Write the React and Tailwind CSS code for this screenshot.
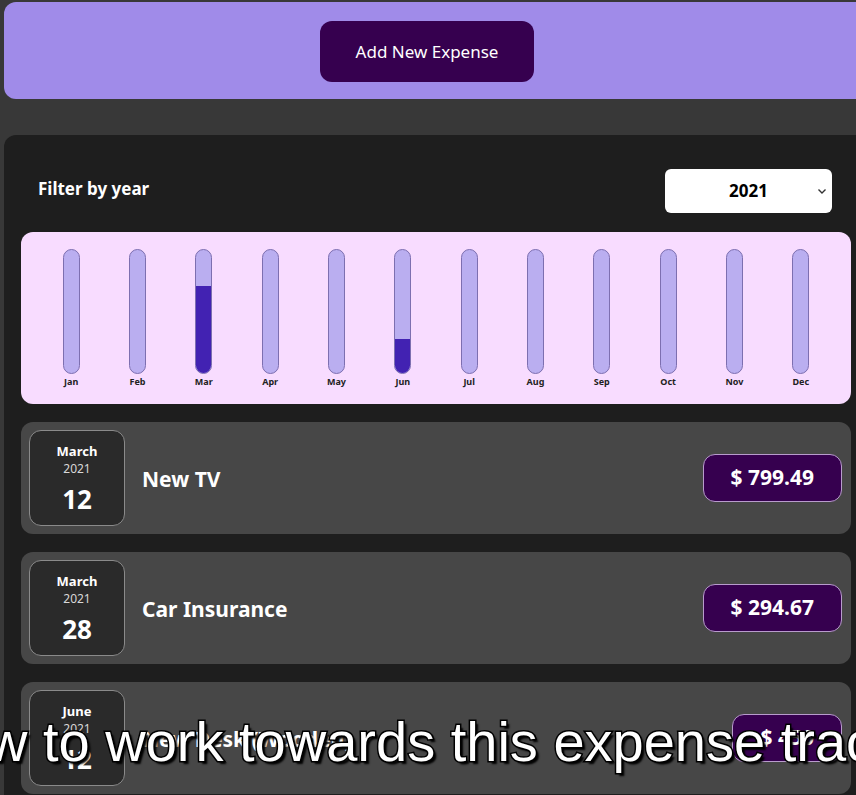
import React from 'react';

const months = [
    { label: 'Jan', fill: 0 },
    { label: 'Feb', fill: 0 },
    { label: 'Mar', fill: 71 },
    { label: 'Apr', fill: 0 },
    { label: 'May', fill: 0 },
    { label: 'Jun', fill: 28 },
    { label: 'Jul', fill: 0 },
    { label: 'Aug', fill: 0 },
    { label: 'Sep', fill: 0 },
    { label: 'Oct', fill: 0 },
    { label: 'Nov', fill: 0 },
    { label: 'Dec', fill: 0 },
];

const expenses = [
    { id: 'e1', month: 'March', year: '2021', day: '12', title: 'New TV', amount: '$ 799.49' },
    { id: 'e2', month: 'March', year: '2021', day: '28', title: 'Car Insurance', amount: '$ 294.67' },
    { id: 'e3', month: 'June', year: '2021', day: '12', title: 'New Desk (Wooden)', amount: '$ 450' },
];

function ExpenseDate({ month, year, day }) {
    return (
        <div className="w-[96px] h-[96px] shrink-0 flex flex-col items-center pt-[11px] rounded-xl border border-[#8a8a8a] bg-[#2a2a2a] text-white">
            <div className="text-[13px] font-bold leading-[18px]">{month}</div>
            <div className="text-[12px] leading-[18px] text-[#d8d8d8]">{year}</div>
            <div className="mt-[5px] text-[26px] font-bold leading-[32px]">{day}</div>
        </div>
    );
}

export default function App() {
    return (
        <div className="relative w-[856px] h-[795px] overflow-hidden bg-[#383838] font-['Noto_Sans','Open_Sans',sans-serif]">
            <div className="pt-[2px] pl-[4px]">
                {/* New expense bar */}
                <div className="w-[863px] h-[97px] rounded-xl bg-[#a08be9] flex items-center pl-[316px] pt-[2px]">
                    <button className="w-[214px] h-[61px] rounded-xl bg-[#36004f] text-white text-[17px]">
                        Add New Expense
                    </button>
                </div>

                {/* Expenses panel */}
                <div className="mt-[36px] w-[863px] rounded-xl bg-[#1e1e1e] px-[17px] pt-[34px] pb-4">
                    <div className="flex items-center justify-between pl-[17px] pr-[18px]">
                        <span className="text-white font-bold text-[17px] -mt-[4px]">Filter by year</span>
                        <div className="relative w-[167px] h-[44px] rounded-md bg-white flex items-center justify-center">
                            <span className="text-[17px] font-bold text-black">2021</span>
                            <svg className="absolute right-[5px] top-[19px]" width="10" height="7" viewBox="0 0 10 7">
                                <path d="M1.5 1.5 L5 5 L8.5 1.5" fill="none" stroke="#333" strokeWidth="1.4" />
                            </svg>
                        </div>
                    </div>

                    {/* Chart */}
                    <div className="mt-[19px] w-[830px] h-[172px] rounded-xl bg-[#f8dcff] px-[17px] pt-[17px] flex">
                        {months.map((m) => (
                            <div key={m.label} className="flex-1 flex flex-col items-center">
                                <div className="relative w-[17px] h-[125px] rounded-xl border border-[#7d6fb0] bg-[#baaef0] overflow-hidden flex flex-col justify-end">
                                    <div className="bg-[#4222b2] w-full" style={{ height: `${m.fill}%` }} />
                                </div>
                                <span className="mt-[1px] text-[9px] font-bold text-[#222]">{m.label}</span>
                            </div>
                        ))}
                    </div>

                    {/* Expense list */}
                    <div className="mt-[18px] w-[830px] flex flex-col gap-[18px]">
                        {expenses.map((e) => (
                            <div key={e.id} className="h-[112px] rounded-xl bg-[#474747] flex items-center pl-[8px] pr-[9px]">
                                <ExpenseDate month={e.month} year={e.year} day={e.day} />
                                <div className="flex-1 pl-[17px] pt-[4px] text-white text-[21px] font-bold">{e.title}</div>
                                <div className="h-[48px] px-[27px] rounded-xl border border-[#b89ccc] bg-[#36004f] flex items-center text-white text-[21px] font-bold">
                                    {e.amount}
                                </div>
                            </div>
                        ))}
                    </div>
                </div>
            </div>

            {/* Video caption overlay */}
            <div className="absolute left-[-13px] top-[714px] leading-none whitespace-nowrap font-['Liberation_Sans',Arial,sans-serif] text-[56px] text-white [-webkit-text-stroke:3px_#000] [paint-order:stroke_fill] [text-shadow:3px_3px_2px_#000]">
                w to work towards this expense trac
            </div>
        </div>
    );
}
